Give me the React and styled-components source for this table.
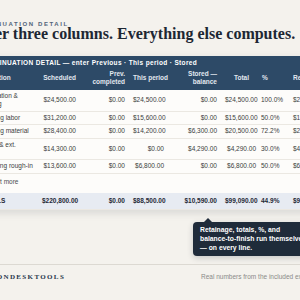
import React from "react";
import styled, { createGlobalStyle } from "styled-components";

const GlobalStyle = createGlobalStyle`
  html, body {
    margin: 0;
    padding: 0;
    background: #f4f2ed;
    overflow: hidden;
  }
  body {
    width: 300px;
    height: 300px;
  }
`;

const Page = styled.div`
  width: 365px;
  margin-left: -30px;
  padding-top: 21px;
  font-family: "Liberation Sans", Arial, sans-serif;
`;

const Eyebrow = styled.div`
  font-size: 6px;
  line-height: 6px;
  font-weight: 700;
  letter-spacing: 1.6px;
  color: #52647a;
  text-transform: uppercase;
`;

const Title = styled.h1`
  margin: 2px 0 0;
  font-family: "Liberation Serif", "Times New Roman", serif;
  font-weight: 700;
  font-size: 16px;
  line-height: 10px;
  padding: 0;
  color: #1d2733;
  white-space: nowrap;
`;

const Card = styled.div`
  margin-top: 17px;
  background: #fdfcfa;
  box-shadow: 0 3px 8px rgba(30, 40, 55, 0.13);
`;

const Table = styled.table`
  width: 365px;
  table-layout: fixed;
  border-collapse: collapse;
  font-size: 6.5px;
  line-height: 8px;
`;

const Head = styled.thead`
  background: #2d4a67;
`;

const Caption = styled.th`
  padding: 3px 10px 1px;
  text-align: left;
  font-weight: 700;
  letter-spacing: 0.35px;
  color: #ffffff;
  white-space: nowrap;
`;

const Th = styled.th`
  padding: 2px ${(p) => (p.$pr ? p.$pr : 4)}px 4px ${(p) => (p.$pl ? p.$pl : 4)}px;
  text-align: ${(p) => p.$align || "right"};
  font-weight: 600;
  color: #e2e8ef;
  vertical-align: middle;
  white-space: nowrap;
`;

const Row = styled.tr`
  border-bottom: 1px solid #ebe8e2;
  background: ${(p) => (p.$total ? "#e7ebf2" : "transparent")};
`;

const Td = styled.td`
  padding: ${(p) => (p.$tall ? 4 : 2.25)}px ${(p) => (p.$align === "left" ? 2 : 4)}px
    ${(p) => (p.$tall ? 4 : 2.25)}px ${(p) => (p.$pl !== undefined ? p.$pl : 4)}px;
  text-align: ${(p) => p.$align || "right"};
  color: ${(p) => (p.$strong ? "#1f2937" : "#3b3d40")};
  font-weight: ${(p) => (p.$strong ? 600 : 400)};
  vertical-align: middle;
  white-space: nowrap;
  overflow: hidden;
`;

const MoreCell = styled.td`
  padding: 4px 4px 7px 10px;
  color: #4a4c50;
  white-space: nowrap;
`;

const CalloutRow = styled.div`
  display: flex;
  padding-left: 223px;
  margin-top: 12px;
`;

const Callout = styled.div`
  position: relative;
  background: #1f2b3a;
  color: #ffffff;
  border-radius: 4px;
  padding: 3px 8px 4px 7px;
  font-size: 6.8px;
  line-height: 9px;
  font-weight: 700;
  white-space: nowrap;
  box-shadow: 0 2px 6px rgba(20, 30, 45, 0.2);

  &::before {
    content: "";
    position: absolute;
    top: -4px;
    left: 11px;
    border-left: 4px solid transparent;
    border-right: 4px solid transparent;
    border-bottom: 4px solid #1f2b3a;
  }
`;

const Divider = styled.hr`
  margin: 8px 0 0;
  border: 0;
  border-top: 1px solid #dcd9d2;
`;

const Footer = styled.div`
  display: grid;
  grid-template-columns: 231px 1fr;
  align-items: center;
  padding-top: 8px;
`;

const Brand = styled.div`
  font-family: "Liberation Serif", "Times New Roman", serif;
  font-weight: 700;
  font-size: 7px;
  letter-spacing: 1.35px;
  color: #26364a;
`;

const Note = styled.div`
  font-size: 6.5px;
  color: #8a8a88;
  white-space: nowrap;
`;

const widths = [68, 42, 49, 39, 53, 39, 29, 46];

const rows = [
  [["Excavation &", "grading"], "$24,500.00", "$0.00", "$24,500.00", "$0.00", "$24,500.00", "100.0%", "$2,450.00"],
  [["Framing labor"], "$31,200.00", "$0.00", "$15,600.00", "$0.00", "$15,600.00", "50.0%", "$1,560.00"],
  [["Framing material"], "$28,400.00", "$0.00", "$14,200.00", "$6,300.00", "$20,500.00", "72.2%", "$2,050.00"],
  [["Doors & ext.", "trim"], "$14,300.00", "$0.00", "$0.00", "$4,290.00", "$4,290.00", "30.0%", "$429.00"],
  [["Plumbing rough-in"], "$13,600.00", "$0.00", "$6,800.00", "$0.00", "$6,800.00", "50.0%", "$680.00"],
];

const totals = [["TOTALS"], "$220,800.00", "$0.00", "$88,500.00", "$10,590.00", "$99,090.00", "44.9%", "$9,909.00"];

const Cells = ({ data, strong }) =>
  data.map((v, i) => {
    if (i === 0) {
      return (
        <Td key={i} $align="left" $pl={10} $strong={strong} $tall={strong}>
          {v.map((line, j) => (
            <React.Fragment key={j}>
              {j > 0 && <br />}
              {line}
            </React.Fragment>
          ))}
        </Td>
      );
    }
    if (i === 6) {
      return (
        <Td key={i} $align="left" $pl={1} $strong={strong} $tall={strong}>
          {v}
        </Td>
      );
    }
    if (i === 7) {
      return (
        <Td key={i} $align="left" $pl={4} $strong={strong} $tall={strong}>
          {v}
        </Td>
      );
    }
    return (
      <Td key={i} $strong={strong} $tall={strong}>
        {v}
      </Td>
    );
  });

const App = () => (
  <>
    <GlobalStyle />
    <Page>
      <Eyebrow>Continuation detail</Eyebrow>
      <Title>Enter three columns. Everything else computes.</Title>
      <Card>
        <Table>
          <colgroup>
            {widths.map((w, i) => (
              <col key={i} style={{ width: w }} />
            ))}
          </colgroup>
          <Head>
            <tr>
              <Caption colSpan={8}>
                CONTINUATION DETAIL — enter Previous · This period · Stored
              </Caption>
            </tr>
            <tr>
              <Th $align="left" $pl={5}>Description</Th>
              <Th>Scheduled</Th>
              <Th>
                Prev.
                <br />
                completed
              </Th>
              <Th $align="left">This period</Th>
              <Th>
                Stored —
                <br />
                balance
              </Th>
              <Th $pr={11}>Total</Th>
              <Th $align="left" $pl={2}>%</Th>
              <Th $align="left">Retainage</Th>
            </tr>
          </Head>
          <tbody>
            {rows.map((r) => (
              <Row key={r[0][0]}>
                <Cells data={r} />
              </Row>
            ))}
            <tr>
              <MoreCell colSpan={8}>+ Insert more</MoreCell>
            </tr>
            <Row $total>
              <Cells data={totals} strong />
            </Row>
          </tbody>
        </Table>
      </Card>
      <CalloutRow>
        <Callout>
          Retainage, totals, %, and
          <br />
          balance-to-finish run themselves
          <br />— on every line.
        </Callout>
      </CalloutRow>
      <Divider />
      <Footer>
        <Brand>STATIONDESKTOOLS</Brand>
        <Note>Real numbers from the included example workbook.</Note>
      </Footer>
    </Page>
  </>
);

export default App;
